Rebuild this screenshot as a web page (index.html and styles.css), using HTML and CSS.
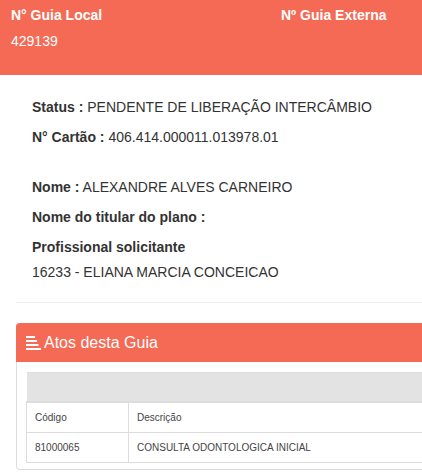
FILE: index.html
```html
<!DOCTYPE html>
<html lang="pt-BR">
<head>
<meta charset="utf-8">
<title>Guia</title>
<link rel="stylesheet" href="styles.css">
</head>
<body>
<div class="page">
<div class="sheet">
<header class="guia-header">
  <div class="guia-col">
    <div class="guia-title">N° Guia Local</div>
    <div class="guia-value">429139</div>
  </div>
  <div class="guia-col">
    <div class="guia-title">Nº Guia Externa</div>
    <div class="guia-value"></div>
  </div>
</header>
<main class="content">
  <section class="details">
    <p class="line"><b>Status :</b> PENDENTE DE LIBERAÇÃO INTERCÂMBIO</p>
    <p class="line"><b>N° Cartão :</b> 406.414.000011.013978.01</p>
    <p class="line line-gap"><b>Nome :</b> ALEXANDRE ALVES CARNEIRO</p>
    <p class="line"><b>Nome do titular do plano :</b></p>
    <p class="line"><b>Profissional solicitante</b></p>
    <p class="line line-tight">16233 - ELIANA MARCIA CONCEICAO</p>
  </section>
  <hr class="divider">
  <section class="panel">
    <div class="panel-heading">
      <svg class="panel-icon" width="15" height="14" viewBox="0 0 15 14" aria-hidden="true">
        <rect x="0" y="0" width="9" height="2" fill="#fff"/>
        <rect x="0" y="4" width="11" height="2" fill="#fff"/>
        <rect x="0" y="8" width="12.5" height="2" fill="#fff"/>
        <rect x="0" y="12" width="15" height="2" fill="#fff"/>
      </svg>
      <span class="panel-title">Atos desta Guia</span>
    </div>
    <div class="panel-body">
      <table class="atos">
        <thead>
          <tr class="atos-band"><th colspan="2"></th></tr>
        </thead>
        <tbody>
          <tr><td class="col-code">Código</td><td>Descrição</td></tr>
          <tr><td class="col-code">81000065</td><td>CONSULTA ODONTOLOGICA INICIAL</td></tr>
        </tbody>
      </table>
    </div>
  </section>
</main>
</div>
</div>
</body>
</html>
```

FILE: styles.css
```css
html, body {
  margin: 0;
  padding: 0;
  background: #fff;
}
body {
  font-family: "Liberation Sans", Arial, sans-serif;
  font-size: 14px;
  color: #333;
}
.page {
  width: 100%;
  overflow: hidden;
}
.sheet {
  width: 600px;
}
.guia-header {
  background: #f56a55;
  color: #fff;
  height: 75px;
  box-sizing: border-box;
  padding: 5px 11px 0;
  display: grid;
  grid-template-columns: 270px 1fr;
}
.guia-title {
  font-weight: bold;
  line-height: 20px;
}
.guia-value {
  margin-top: 6px;
  line-height: 20px;
  min-height: 20px;
}
.content {
  padding: 0 0 0 16px;
}
.details {
  padding: 22px 0 0 16px;
}
.line {
  margin: 0 0 10px;
  line-height: 20px;
}
.line-gap {
  margin-top: 30px;
}
.line-tight {
  margin-top: -5px;
  margin-bottom: 0;
}
.divider {
  border: 0;
  border-top: 1px solid #eee;
  margin: 20px 0 20px;
  height: 0;
}
.panel {
  border: 1px solid #ddd;
  border-top: 0;
  border-radius: 4px;
  background: #fff;
}
.panel-heading {
  background: #f56a55;
  color: #fff;
  border-radius: 4px 4px 0 0;
  height: 39px;
  box-sizing: border-box;
  padding: 0 0 0 10px;
  display: flex;
  align-items: center;
  gap: 3px;
  margin: 0 -1px;
}
.panel-icon {
  display: block;
  flex: none;
  margin-top: 1px;
}
.panel-title {
  font-size: 16px;
  line-height: 20px;
}
.panel-body {
  padding: 10px 9px 6px;
}
.atos {
  border-collapse: collapse;
  width: 100%;
  font-size: 10px;
  color: #444;
}
.atos th, .atos td {
  border: 1px solid #ddd;
  padding: 8px 8px;
  line-height: 13px;
  text-align: left;
  font-weight: normal;
}
.atos-band th {
  background: #e3e3e3;
  height: 12px;
  border-bottom: 2px solid #ddd;
  border-left: 0;
  border-right: 0;
}
.col-code {
  width: 85px;
}
```
